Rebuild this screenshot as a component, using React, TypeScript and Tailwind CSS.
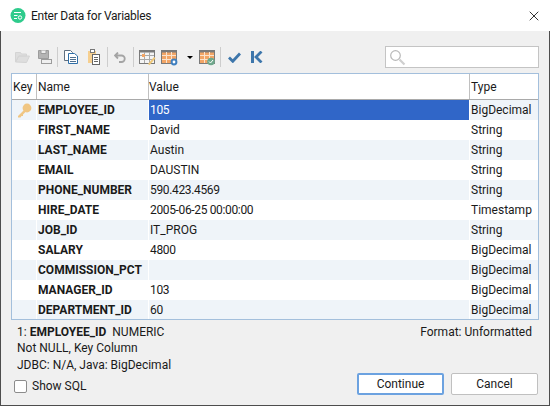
import { X } from 'lucide-react';

const rows = [
  ['EMPLOYEE_ID', '105', 'BigDecimal'],
  ['FIRST_NAME', 'David', 'String'],
  ['LAST_NAME', 'Austin', 'String'],
  ['EMAIL', 'DAUSTIN', 'String'],
  ['PHONE_NUMBER', '590.423.4569', 'String'],
  ['HIRE_DATE', '2005-06-25 00:00:00', 'Timestamp'],
  ['JOB_ID', 'IT_PROG', 'String'],
  ['SALARY', '4800', 'BigDecimal'],
  ['COMMISSION_PCT', '', 'BigDecimal'],
  ['MANAGER_ID', '103', 'BigDecimal'],
  ['DEPARTMENT_ID', '60', 'BigDecimal'],
];

function Divider({ className }: { className: string }) {
  return <div className={`h-[20px] w-px shrink-0 bg-[#cdcdcd] ${className}`} />;
}

function GridIcon({ className, plain, children }: { className: string; plain?: boolean; children?: React.ReactNode }) {
  return (
    <svg width="16" height="15" viewBox="0 0 16 15" className={`shrink-0 overflow-visible ${className}`}>
      <rect x="0.5" y="0.5" width="15" height="13" fill={plain ? '#f4f4f4' : '#f2a566'} stroke="#7a7a7a" />
      <path d="M0.5 1.5h15" stroke="#7a7a7a" strokeWidth="2" />
      <path d="M5.5 2v11M10.5 2v11M1 5.5h14M1 9.5h14" stroke={plain ? '#a8a8a8' : '#fbe3cd'} strokeWidth="1" />
      {children}
    </svg>
  );
}

export default function App() {
  return (
    <div className="flex h-[406px] w-[550px] flex-col overflow-hidden bg-[#f0f0f0] font-['Roboto',sans-serif] text-[12px] text-[#1a1a1a]">
      <div className="flex h-[31px] shrink-0 items-center bg-white pl-[10px] pr-[8px]">
        <svg width="16" height="15" viewBox="0 0 16 15" className="mr-[5px]">
          <rect x="0.5" width="15" height="15" rx="7.5" fill="#2ecb8c" />
          <path d="M4 4.5h7M4 7.5h3.5M4 10.5h3" stroke="#fff" strokeWidth="1.2" />
          <circle cx="10" cy="9.5" r="1.7" fill="none" stroke="#fff" />
        </svg>
        <span className="tracking-[-0.25px]">Enter Data for Variables</span>
        <X className="ml-auto h-[16px] w-[16px] text-black" strokeWidth={1.2} />
      </div>

      <div className="flex min-h-0 flex-1 flex-col border-x border-b border-[#4d4d4d]">
        <div className="flex h-[42px] shrink-0 items-center pl-[14px] pr-[10px] pt-[10px]">
          <svg width="15" height="12" viewBox="0 0 15 12" className="shrink-0">
            <path d="M0.5 11V1.5h5l1 1.5h5V5H4L0.5 11l3-6h11l-3 6.5z" fill="#dedede" stroke="#d4d4d4" />
          </svg>
          <svg width="14" height="14" viewBox="0 0 14 14" className="ml-[8px] shrink-0">
            <path d="M0.5 0.5h10v8h-10z" fill="#b4b4b4" stroke="#9c9c9c" />
            <path d="M3 0.5v3h5v-3" fill="#eee" stroke="#9c9c9c" />
            <rect x="3.5" y="9.5" width="10" height="4" fill="#efefef" stroke="#9c9c9c" />
          </svg>
          <Divider className="ml-[5px]" />
          <svg width="14" height="14" viewBox="0 0 14 14" className="ml-[6px] shrink-0">
            <path d="M0.5 0.5h6l2 2v8h-8z" fill="#fff" stroke="#5f6f80" />
            <path d="M4.5 3.5h6l3 2.5v7.5h-9z" fill="#fff" stroke="#2f6fa8" />
            <path d="M6 7.5h6M6 9.5h6M6 11.5h6" stroke="#4f6f8f" />
          </svg>
          <svg width="12" height="16" viewBox="0 0 12 16" className="ml-[10px] shrink-0">
            <rect x="0" y="2" width="8" height="12" fill="#f6cf8f" />
            <rect x="2.5" y="0.5" width="4" height="3" fill="#fff" stroke="#777" />
            <rect x="4.5" y="5.5" width="7" height="10" fill="#fff" stroke="#666" />
            <path d="M6 8.5h4M6 10.5h4M6 12.5h4" stroke="#666" />
          </svg>
          <Divider className="ml-[7px]" />
          <svg width="12" height="11" viewBox="0 0 12 11" className="ml-[6px] shrink-0">
            <path d="M4 0.5L1 3.5l3 3M1.5 3.5h6a3.2 3.2 0 0 1 0 6.5H5" fill="none" stroke="#a4a4a4" strokeWidth="1.8" />
          </svg>
          <Divider className="ml-[7px]" />
          <GridIcon className="ml-[5px]" plain>
            <rect x="3" y="4" width="3" height="3" fill="#f2a566" />
            <path d="M9 14l6-7 1.5 1.3-6 7z" fill="#f0c878" />
          </GridIcon>
          <GridIcon className="ml-[6px]">
            <circle cx="13" cy="12" r="2.4" fill="#fff" stroke="#3f7fbf" strokeWidth="2" />
          </GridIcon>
          <div className="ml-[10px] h-0 w-0 shrink-0 border-x-[3px] border-t-[3px] border-x-transparent border-t-black" />
          <GridIcon className="ml-[6px]">
            <circle cx="12" cy="11.5" r="3.8" fill="#6fa88c" />
            <path d="M10 11.5l1.5 1.5 2.5-3" fill="none" stroke="#fff" />
          </GridIcon>
          <Divider className="ml-[5px]" />
          <svg width="13" height="11" viewBox="0 0 13 11" className="ml-[7px] shrink-0">
            <path d="M1 5.5l3.8 3.8L12 1.5" fill="none" stroke="#3d76ab" strokeWidth="2.8" />
          </svg>
          <svg width="12" height="12" viewBox="0 0 12 12" className="ml-[10px] shrink-0">
            <rect x="0" y="0" width="3" height="12" fill="#3d76ab" />
            <path d="M10.5 0.5L5 6l5.5 5.5" fill="none" stroke="#3d76ab" strokeWidth="2.8" />
          </svg>
          <div className="ml-auto flex h-[22px] w-[154px] items-center border border-[#c4c4c4] bg-white pl-[3px]">
            <svg width="17" height="17" viewBox="0 0 17 17">
              <circle cx="6.5" cy="6.5" r="4.8" fill="#fff" stroke="#b8b8b8" strokeWidth="1.2" />
              <path d="M10.5 10.5l5 5" stroke="#cfcfcf" strokeWidth="2.2" />
            </svg>
          </div>
        </div>

        <div className="mx-[10px] h-[247px] shrink-0 overflow-hidden border border-[#a3bfdc] bg-white">
          <div className="flex h-[26px] border-b border-[#a9a9a9] leading-[26px]">
            <div className="w-[25px] border-r border-[#c0c0c0] pl-px">Key</div>
            <div className="w-[112px] border-r border-[#c0c0c0] pl-px">Name</div>
            <div className="w-[321px] border-r border-[#c0c0c0]">Value</div>
            <div className="pl-px">Type</div>
          </div>
          {rows.map((r, i) => (
            <div key={r[0]} className={`flex h-[20px] leading-[20px] ${i % 2 === 0 ? 'bg-[#eff4f9]' : 'bg-white'}`}>
              <div className="flex w-[25px] items-center justify-center border-r border-white">
                {i === 0 && (
                  <svg width="15" height="15" viewBox="0 0 15 15">
                    <circle cx="10" cy="5" r="4.4" fill="#f0c683" />
                    <path d="M7 7L1 13v1.5h2.5l1-1.5h1.5v-1.5l3.5-3.5" fill="#f0c683" />
                  </svg>
                )}
              </div>
              <div className="w-[112px] whitespace-nowrap border-r border-white pl-px font-bold">{r[0]}</div>
              <div className={`w-[320px] pl-px ${/\d/.test(r[1]) ? 'tracking-[-0.35px]' : ''} ${i === 0 ? 'bg-[#3066c8] text-white' : ''}`}>{r[1]}</div>
              <div className="border-l border-white pl-px">{r[2]}</div>
            </div>
          ))}
        </div>

        <div className="flex min-h-0 flex-1 justify-between pl-[16px] pr-[11px]">
          <div className="flex flex-col">
            <div className="mt-[4px] leading-[16px]">
              1: <b>EMPLOYEE_ID</b>&nbsp; NUMERIC
            </div>
            <div className="leading-[17px]">Not NULL, Key Column</div>
            <div className="leading-[16px]">JDBC: N/A, Java: BigDecimal</div>
            <label className="-ml-[3px] mt-[4px] flex items-center gap-[5px]">
              <span className="h-[13px] w-[13px] rounded-[2px] border border-[#8c8c8c] bg-white" />
              Show SQL
            </label>
          </div>
          <div className="flex flex-col items-end">
            <div className="mr-[6px] mt-[4px] leading-[16px]">Format: Unformatted</div>
            <div className="mb-[10px] mt-auto flex gap-[7px]">
              <button className="h-[22px] w-[87px] rounded-[2px] border-2 border-[#6ca2e0] bg-white">Continue</button>
              <button className="h-[22px] w-[87px] rounded-[2px] border border-[#c0c0c0] bg-white">Cancel</button>
            </div>
          </div>
        </div>
      </div>
    </div>
  );
}
